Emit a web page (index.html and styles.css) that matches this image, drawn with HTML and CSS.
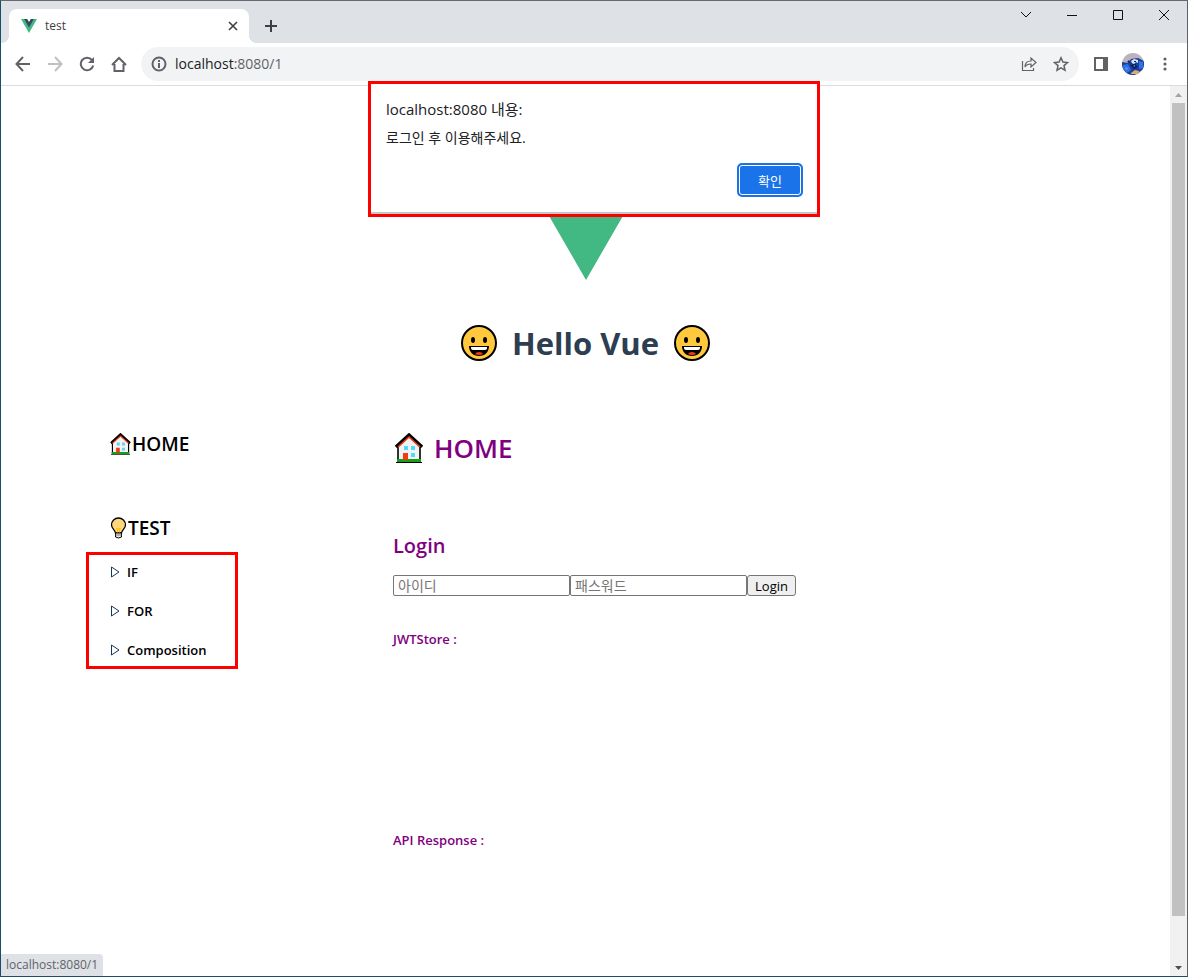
FILE: index.html
```html
<!doctype html>
<html lang="ko">
<head>
    <meta charset="UTF-8">
    <meta name="viewport" content="width=device-width, initial-scale=1.0">
    <title>test</title>
    <link rel="stylesheet" href="styles.css">
</head>
<body>
<svg class="defs" aria-hidden="true">
    <symbol id="vue" viewBox="0 0 196 170">
        <path fill="#42b883" d="M121 0L98 39 75 0H0l98 170L196 0z"/>
        <path fill="#35495e" d="M121 0L98 39 75 0H39l59 102L157 0z"/>
    </symbol>
    <symbol id="smile" viewBox="0 0 38 38">
        <circle cx="19" cy="19" r="17" fill="#ffc83d" stroke="#000" stroke-width="2"/>
        <ellipse cx="13" cy="16" rx="2" ry="3"/>
        <ellipse cx="25" cy="16" rx="2" ry="3"/>
        <path d="M9 22h20c0 6-4 10-10 10S9 28 9 22z"/>
        <path fill="#fff" d="M11 23h16v1q0 2-2 2H13q-2 0-2-2z"/>
        <path fill="#f03a17" d="M15 30q1-2 4-2t4 2q-4 2-8 0z"/>
    </symbol>
    <symbol id="house" viewBox="0 0 28 30">
        <path fill="#f2f2f2" stroke="#000" stroke-width="1.6" d="M3 28V13L14 3l11 10v15z"/>
        <path fill="#16a016" d="M2 26h24v3H2z"/>
        <path fill="none" stroke="#000" stroke-width="3.4" d="M1 14L14 2l13 12"/>
        <path fill="none" stroke="#f03a17" stroke-width="1.6" d="M3 14L14 4l11 10"/>
        <path fill="#50d8ff" d="M9 13h4v4H9zM16 13h4v4h-4zM16 20h4v4h-4z"/>
        <path fill="#f03a17" d="M8 20h5v7H8z"/>
        <path fill="none" stroke="#000" d="M1 29.500h26"/>
    </symbol>
    <symbol id="bulb" viewBox="0 0 16 22">
        <path fill="#ffd679" stroke="#000" stroke-width="1.3" d="M5 16c0-3-4-4-4-8a7 7 0 0 1 14 0c0 4-4 5-4 8z"/>
        <path fill="none" stroke="#ffb900" d="M6 11l1 1v4M10 11l-1 1v4M6 12h4"/>
        <path fill="#e6e6e6" stroke="#000" d="M5 16h6v4q-3 2-6 0z"/>
        <path stroke="#777" d="M5 18h6"/>
    </symbol>
    <symbol id="tri" viewBox="0 0 10 12">
        <path fill="none" stroke="#17365c" d="M1.5 1v10L9 6z"/>
    </symbol>
</svg>

<div class="window">
    <header class="tabs">
        <div class="tab">
            <svg class="favicon" viewBox="0 0 196 170"><use href="#vue"/></svg>
            <span class="tab-title">test</span>
            <button class="icon-btn tab-close" aria-label="탭 닫기">
                <svg width="10" height="10" viewBox="0 0 10 10"><path stroke-width="1.6" d="M1 1l8 8M9 1L1 9"/></svg>
            </button>
        </div>
        <button class="icon-btn new-tab" aria-label="새 탭">
            <svg width="14" height="14" viewBox="0 0 14 14"><path d="M7 1v12M1 7h12"/></svg>
        </button>
        <div class="win-controls">
            <button aria-label="탭 검색"><svg width="12" height="12" viewBox="0 0 12 12"><path d="M1 3l5 5 5-5"/></svg></button>
            <button aria-label="최소화"><svg width="12" height="12" viewBox="0 0 12 12"><path d="M1 6.5h10"/></svg></button>
            <button aria-label="최대화"><svg width="12" height="12" viewBox="0 0 12 12"><path d="M1.5 1.5h9v9h-9z"/></svg></button>
            <button aria-label="닫기"><svg width="12" height="12" viewBox="0 0 12 12"><path d="M1 1l10 10M11 1L1 11"/></svg></button>
        </div>
    </header>

    <div class="toolbar">
        <button class="icon-btn" aria-label="뒤로"><svg width="16" height="16" viewBox="0 0 16 16"><path d="M15 8H2M8 1L1.5 8 8 15"/></svg></button>
        <button class="icon-btn disabled" aria-label="앞으로" disabled><svg width="16" height="16" viewBox="0 0 16 16"><path d="M1 8h13M8 1l6.5 7L8 15"/></svg></button>
        <button class="icon-btn" aria-label="새로고침"><svg width="16" height="16" viewBox="0 0 16 16"><path d="M13 4a6.3 6.3 0 1 0 1.2 5.5"/><path class="fill" d="M15 1v6H9z"/></svg></button>
        <button class="icon-btn" aria-label="홈"><svg width="16" height="16" viewBox="0 0 16 16"><path d="M1 9l7-7 7 7M3.5 8v7h9V8"/></svg></button>
        <div class="omnibox">
            <svg class="info" width="16" height="16" viewBox="0 0 16 16"><circle cx="8" cy="8" r="6.5"/><path d="M8 7v5M8 4v2"/></svg>
            <a class="url" href="#"><span>localhost</span>:8080/1</a>
            <button class="icon-btn" aria-label="공유"><svg class="thin" width="16" height="16" viewBox="0 0 16 16"><path stroke-width="1.2" d="M1.5 5v9.500h11V12M4 11c0-4 2-6 6-6V2l5 4.500-5 4.500V8c-3 0-5 1-6 3z"/></svg></button>
            <button class="icon-btn" aria-label="북마크"><svg width="16" height="16" viewBox="0 0 16 16"><path stroke-width="1.5" d="M8 1.8l1.900 4.300 4.600.4-3.500 3.100 1 4.600L8 11.800l-4 2.400 1-4.600-3.500-3.100 4.600-.4z"/></svg></button>
        </div>
        <button class="icon-btn" aria-label="측면 패널"><svg width="16" height="16" viewBox="0 0 16 16"><path d="M2 2h12v12H2z"/><path class="fill" d="M10 2h4v12h-4z"/></svg></button>
        <button class="icon-btn profile" aria-label="프로필">
            <svg width="22" height="22" viewBox="0 0 22 22">
                <clipPath id="round"><circle cx="11" cy="11" r="11"/></clipPath>
                <g clip-path="url(#round)">
                    <rect width="22" height="22" fill="#b9b4bd"/>
                    <path fill="#1c3f9e" d="M0 9l6 1 3-4 7-1 6 3v8l-5 3-4 3H4L0 17z"/>
                    <path fill="#2f72e8" d="M1 12l5-1 3 6-4 3-4-4zM17 8l4 1v6l-4 1z"/>
                    <path fill="#dce6f7" d="M9 8l3-2 4 1v3l-2-1-2 2-2-1z"/>
                    <path fill="#0c1c55" d="M8 12l5-1 3 3-4 2zM5 9l2-2 1 3zM12 8h2v1h-2z"/>
                    <path fill="#5f93f0" d="M3 15l2-1 1 2-2 1zM11 13l2-1v2z"/>
                    <path fill="#d8ae76" d="M9 20l4-3 4 1-1 3H9z"/>
                </g>
            </svg>
        </button>
        <button class="icon-btn" aria-label="메뉴"><svg width="16" height="16" viewBox="0 0 16 16"><g class="fill"><circle cx="8" cy="3" r="1.6"/><circle cx="8" cy="8" r="1.6"/><circle cx="8" cy="13" r="1.6"/></g></svg></button>
    </div>

    <div class="viewport">
        <div class="page">
            <svg class="logo" viewBox="0 0 196 170"><use href="#vue"/></svg>
            <h1>
                <svg viewBox="0 0 38 38"><use href="#smile"/></svg>
                <span>Hello Vue</span>
                <svg viewBox="0 0 38 38"><use href="#smile"/></svg>
            </h1>
            <div class="columns">
                <nav class="side">
                    <h3><svg class="house-s" viewBox="0 0 28 30"><use href="#house"/></svg><a href="#">HOME</a></h3>
                    <h3><svg class="bulb" viewBox="0 0 16 22"><use href="#bulb"/></svg><a href="#">TEST</a></h3>
                    <ul class="marked">
                        <li><svg viewBox="0 0 10 12"><use href="#tri"/></svg><a href="#">IF</a></li>
                        <li><svg viewBox="0 0 10 12"><use href="#tri"/></svg><a href="#">FOR</a></li>
                        <li><svg viewBox="0 0 10 12"><use href="#tri"/></svg><a href="#">Composition</a></li>
                    </ul>
                </nav>
                <main class="content">
                    <h2><svg viewBox="0 0 28 30"><use href="#house"/></svg>HOME</h2>
                    <h3>Login</h3>
                    <form class="login">
                        <input type="text" placeholder="아이디" aria-label="아이디">
                        <input type="password" placeholder="패스워드" aria-label="패스워드">
                        <button type="button">Login</button>
                    </form>
                    <h5 class="store">JWTStore :</h5>
                    <h5>API Response :</h5>
                </main>
            </div>
        </div>
        <div class="scrollbar">
            <svg viewBox="0 0 17 17"><path fill="#a3a3a3" d="M5 11h7L8.5 7z"/></svg>
            <div class="track"><div class="thumb"></div></div>
            <svg viewBox="0 0 17 17"><path fill="#505050" d="M5 7h7l-3.5 4z"/></svg>
        </div>
    </div>

    <div class="alert-mark">
        <div class="alert" role="alertdialog" aria-labelledby="alert-title">
            <p class="alert-title" id="alert-title">localhost:8080 내용:</p>
            <p>로그인 후 이용해주세요.</p>
            <button>확인</button>
        </div>
    </div>
    <div class="status">localhost:8080/1</div>
</div>
</body>
</html>
```
FILE: styles.css
```css
* {margin: 0;padding: 0;box-sizing: border-box}
body {
    font-family: "Open Sans", "Noto Sans CJK KR", sans-serif;
    background: #fff;
    color: #000;
}
a {color: inherit;text-decoration: none}
ul {list-style: none}
button, input {font-family: inherit}
.defs {display: none}

.window {
    position: relative;
    display: flex;
    flex-direction: column;
    height: 100vh;
    overflow: hidden;
    border: 1px solid #174f6b;
    border-top-color: #68696c;
    border-right-color: #5d6064;
}

/* tab strip */
.tabs {
    display: flex;
    align-items: flex-start;
    height: 42px;
    padding-left: 8px;
    background: #dee1e6;
}
.tab {
    position: relative;
    display: flex;
    align-items: center;
    width: 240px;
    height: 34px;
    margin-top: 8px;
    padding: 0 11px 0 12px;
    border-radius: 8px 8px 0 0;
    background: #fff;
}
.tab::before, .tab::after {
    content: "";
    position: absolute;
    bottom: 0;
    width: 8px;
    height: 8px;
}
.tab::before {left: -8px;background: radial-gradient(circle at 0 0, transparent 8px, #fff 8px)}
.tab::after {right: -8px;background: radial-gradient(circle at 100% 0, transparent 8px, #fff 8px)}
.favicon {width: 16px;height: 14px}
.tab-title {flex: 1;margin-left: 8px;font-size: 12px;line-height: 16px;color: #3c4043}
.icon-btn {
    display: flex;
    align-items: center;
    justify-content: center;
    border: 0;
    background: none;
}
.icon-btn svg, .win-controls svg, .info {fill: none;stroke: #5f6368;stroke-width: 2}
.icon-btn .fill {fill: #5f6368;stroke: none}
.tab-close svg, .new-tab svg {stroke: #3c4043}
.new-tab {width: 28px;height: 28px;margin: 11px 0 0 8px}
.win-controls {display: flex;margin-left: auto}
.win-controls button {
    display: flex;
    align-items: center;
    justify-content: center;
    width: 46px;
    height: 28px;
    border: 0;
    background: none;
}
.win-controls svg {stroke: #111;stroke-width: 1}

/* toolbar */
.toolbar {
    display: flex;
    align-items: center;
    height: 43px;
    padding: 0 6px;
    border-bottom: 1px solid #dadce0;
    background: #fff;
}
.toolbar .icon-btn {width: 32px;height: 32px}
.toolbar .disabled svg {stroke: #bdc1c6}
.toolbar .profile svg {stroke: none}
.omnibox {
    flex: 1;
    display: flex;
    align-items: center;
    height: 34px;
    margin: 0 6px;
    padding: 0 2px 0 10px;
    border-radius: 17px;
    background: #f1f3f4;
}
.url {flex: 1;margin-left: 8px;font-size: 14px;line-height: 18px;color: #5f6368}
.url span {color: #202124}

/* page */
.viewport {flex: 1;display: flex;min-height: 0}
.page {flex: 1;overflow: hidden}
.logo {
    display: block;
    width: 196px;
    height: 170px;
    margin: 24px auto 0;
}
h1 {
    display: flex;
    align-items: center;
    justify-content: center;
    gap: 14px;
    margin-top: 39px;
    font-size: 31px;
    line-height: 48px;
    font-weight: 700;
    color: #2c3e50;
}
h1 svg {width: 38px;height: 38px}
.columns {
    display: grid;
    grid-template-columns: 283px 1fr;
    margin-top: 63px;
    padding-left: 109px;
}
.side h3 {
    display: flex;
    align-items: center;
    margin-bottom: 56px;
    font-size: 19px;
    line-height: 28px;
    font-weight: 600;
}
.house-s {width: 21px;height: 22px;margin-right: 1px}
.bulb {width: 17px;height: 22px;margin-right: 1px}
.marked {
    display: grid;
    gap: 19px;
    width: 152px;
    margin: -46px 0 0 -24px;
    padding: 7px 0 6px 21px;
    border: 3px solid #f00;
}
.marked li {
    display: flex;
    align-items: center;
    gap: 7px;
    font-size: 13px;
    line-height: 20px;
    font-weight: 600;
}
.marked svg {width: 10px;height: 12px}
.content {color: purple}
.content h2 {
    display: flex;
    align-items: center;
    gap: 11px;
    padding-left: 2px;
    font-size: 26px;
    line-height: 36px;
    font-weight: 600;
}
.content h2 svg {width: 28px;height: 30px}
.content h3 {
    margin: 66px 0 15px;
    font-size: 20px;
    line-height: 28px;
    font-weight: 600;
}
.login {display: flex}
.login input {
    width: 177px;
    height: 21px;
    padding: 0 4px;
    border: 1px solid #767676;
    border-radius: 2px;
    font-size: 14px;
    line-height: 18px;
}
.login input::placeholder {color: #757575}
.login button {
    width: 49px;
    height: 21px;
    border: 1px solid #767676;
    border-radius: 3px;
    background: #efefef;
    font-size: 13px;
    line-height: 18px;
    color: #000;
}
.content h5 {font-size: 13px;line-height: 20px;font-weight: 600}
.content .store {margin: 33px 0 181px}

.scrollbar {
    display: flex;
    flex-direction: column;
    width: 17px;
    background: #f1f1f1;
}
.scrollbar svg {width: 17px;height: 17px}
.track {flex: 1;padding: 0 2px}
.thumb {height: 95%;background: #c1c1c1}

/* alert over the page */
.alert-mark {
    position: absolute;
    top: 80px;
    left: 50%;
    width: 452px;
    transform: translateX(-50%);
    border: 3px solid #f00;
}
.alert {
    display: flex;
    flex-direction: column;
    padding: 14px 14px 15px 15px;
    border-bottom: 2px solid #c4c6c8;
    background: #fff;
    font-size: 14px;
    line-height: 20px;
    color: #202124;
}
.alert-title {margin-bottom: 8px;font-size: 15px;line-height: 22px}
.alert button {
    align-self: flex-end;
    width: 66px;
    height: 34px;
    margin-top: 15px;
    border: 2px solid #1a73e8;
    border-radius: 5px;
    background: #1a73e8;
    box-shadow: inset 0 0 0 1px #fff;
    font-size: 13px;
    color: #fff;
}
.status {
    position: absolute;
    left: 0;
    bottom: 0;
    padding: 0 5px;
    border-radius: 0 4px 0 0;
    background: #dee1e6;
    font-size: 12px;
    line-height: 22px;
    color: #5f6368;
}
```
